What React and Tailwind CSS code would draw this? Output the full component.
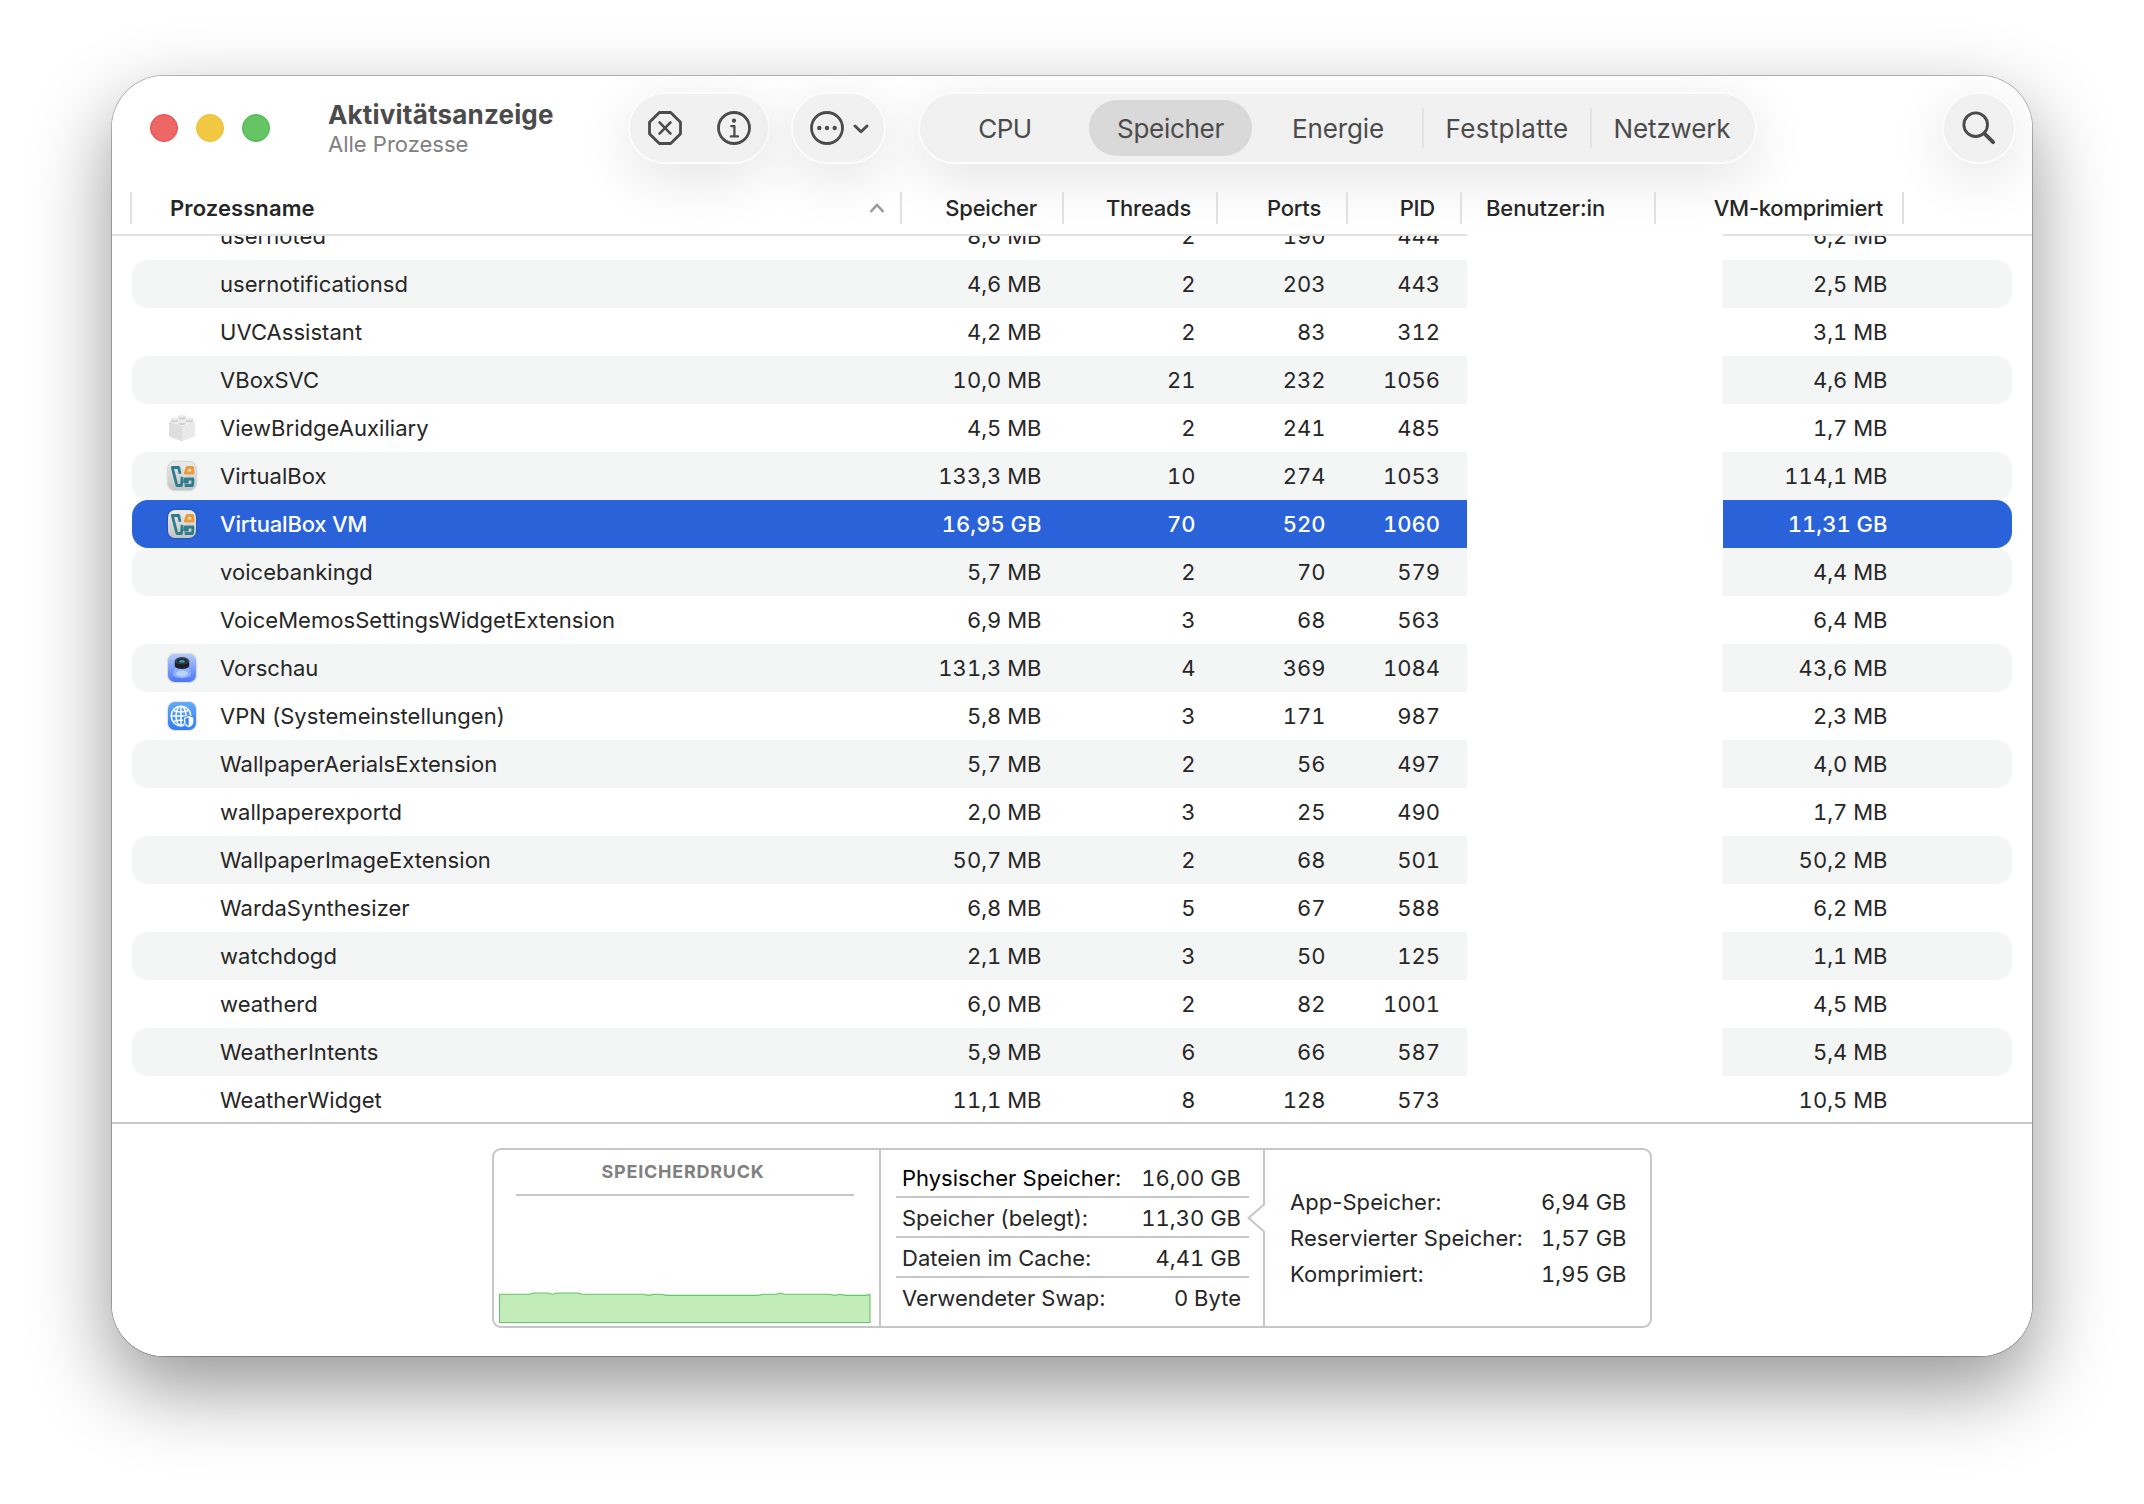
import React from 'react';
import clsx from 'clsx';

const processes = [
  { name: 'usernoted', memory: '8,6 MB', threads: 2, ports: 190, pid: 444, compressed: '6,2 MB' },
  { name: 'usernotificationsd', memory: '4,6 MB', threads: 2, ports: 203, pid: 443, compressed: '2,5 MB' },
  { name: 'UVCAssistant', memory: '4,2 MB', threads: 2, ports: 83, pid: 312, compressed: '3,1 MB' },
  { name: 'VBoxSVC', memory: '10,0 MB', threads: 21, ports: 232, pid: 1056, compressed: '4,6 MB' },
  { name: 'ViewBridgeAuxiliary', icon: 'brick', memory: '4,5 MB', threads: 2, ports: 241, pid: 485, compressed: '1,7 MB' },
  { name: 'VirtualBox', icon: 'vbox', memory: '133,3 MB', threads: 10, ports: 274, pid: 1053, compressed: '114,1 MB' },
  { name: 'VirtualBox VM', icon: 'vbox', memory: '16,95 GB', threads: 70, ports: 520, pid: 1060, compressed: '11,31 GB', selected: true },
  { name: 'voicebankingd', memory: '5,7 MB', threads: 2, ports: 70, pid: 579, compressed: '4,4 MB' },
  { name: 'VoiceMemosSettingsWidgetExtension', memory: '6,9 MB', threads: 3, ports: 68, pid: 563, compressed: '6,4 MB' },
  { name: 'Vorschau', icon: 'preview', memory: '131,3 MB', threads: 4, ports: 369, pid: 1084, compressed: '43,6 MB' },
  { name: 'VPN (Systemeinstellungen)', icon: 'vpn', memory: '5,8 MB', threads: 3, ports: 171, pid: 987, compressed: '2,3 MB' },
  { name: 'WallpaperAerialsExtension', memory: '5,7 MB', threads: 2, ports: 56, pid: 497, compressed: '4,0 MB' },
  { name: 'wallpaperexportd', memory: '2,0 MB', threads: 3, ports: 25, pid: 490, compressed: '1,7 MB' },
  { name: 'WallpaperImageExtension', memory: '50,7 MB', threads: 2, ports: 68, pid: 501, compressed: '50,2 MB' },
  { name: 'WardaSynthesizer', memory: '6,8 MB', threads: 5, ports: 67, pid: 588, compressed: '6,2 MB' },
  { name: 'watchdogd', memory: '2,1 MB', threads: 3, ports: 50, pid: 125, compressed: '1,1 MB' },
  { name: 'weatherd', memory: '6,0 MB', threads: 2, ports: 82, pid: 1001, compressed: '4,5 MB' },
  { name: 'WeatherIntents', memory: '5,9 MB', threads: 6, ports: 66, pid: 587, compressed: '5,4 MB' },
  { name: 'WeatherWidget', memory: '11,1 MB', threads: 8, ports: 128, pid: 573, compressed: '10,5 MB' },
];

const memoryStats = [
  { label: 'Physischer Speicher:', value: '16,00 GB', strong: true },
  { label: 'Speicher (belegt):', value: '11,30 GB' },
  { label: 'Dateien im Cache:', value: '4,41 GB' },
  { label: 'Verwendeter Swap:', value: '0 Byte' },
];

const memoryDetails = [
  { label: 'App-Speicher:', value: '6,94 GB' },
  { label: 'Reservierter Speicher:', value: '1,57 GB' },
  { label: 'Komprimiert:', value: '1,95 GB' },
];

function BrickIcon() {
  return (
    <svg viewBox="0 0 28 28" className="h-7 w-7">
      <path d="M1 7.500 14 12v15.200L3 23.300q-2-.8-2-2.300Z" fill="#dedede" />
      <path d="M14 12 27 7.500V21q0 1.500-2 2.300l-11 3.900Z" fill="#e9e9e9" />
      <path d="M1 7.300 14 3l13 4.300L14 12Z" fill="#f1f1f1" />
      {[[14, 2.6], [6.5, 5.3], [21.5, 5.3], [14, 8]].map(([x, y]) => (
        <g key={`${x}-${y}`}>
          <path d={`M${x - 3.5} ${y - 0.5}v2a3.500 1.600 0 0 0 7 0v-2Z`} fill="#cdcdcd" />
          <ellipse cx={x} cy={y - 0.5} rx="3.5" ry="1.6" fill="#ededed" />
        </g>
      ))}
    </svg>
  );
}

function VirtualBoxIcon() {
  return (
    <svg viewBox="0 0 28 28" className="h-7 w-7 overflow-visible drop-shadow-[0_0.5px_1px_rgba(0,0,0,0.35)]">
      <defs>
        <linearGradient id="vbox" x1="0" y1="0" x2="0" y2="1">
          <stop offset="0" stopColor="#eaebea" />
          <stop offset="1" stopColor="#c3c4c4" />
        </linearGradient>
      </defs>
      <rect width="28" height="28" rx="7" fill="url(#vbox)" />
      <g fill="none" strokeWidth="2.800" strokeLinejoin="round">
        <path d="m12 11.700-1.300-6.200H4.300l4.600 18h4.600l.600-8.700" stroke="#2f7c8c" />
        <path d="M26 17h-8.800l-.700 3h4.200M25 17l-.500 6.500h-7.800" stroke="#2f7c8c" />
        <path d="M24.500 5.400h-5.200l-1.900 5.500h7.500Z" stroke="#ec9a35" strokeWidth="3" />
      </g>
    </svg>
  );
}

function PreviewIcon() {
  return (
    <svg viewBox="0 0 28 28" className="h-7 w-7 overflow-visible drop-shadow-[0_0.5px_1px_rgba(0,0,0,0.3)]">
      <defs>
        <linearGradient id="preview" x1="0" y1="0" x2="0" y2="1">
          <stop offset="0" stopColor="#b4cdfb" />
          <stop offset="1" stopColor="#4a74f5" />
        </linearGradient>
      </defs>
      <rect width="28" height="28" rx="7" fill="url(#preview)" />
      <path d="M7.500 12 5 20c0 5.500 18 5.500 18 0l-2.500-8Z" fill="#8db2fb" />
      <ellipse cx="14" cy="19.500" rx="6" ry="3" fill="#b9d2fd" />
      <path d="M6.800 6.800v5c0 4.200 14.400 4.200 14.400 0v-5Z" fill="#1d1f22" />
      <ellipse cx="14" cy="6.700" rx="7.200" ry="3.600" fill="#43464a" />
      <ellipse cx="14" cy="7" rx="5.200" ry="2.400" fill="#17303f" />
      <ellipse cx="14" cy="7.400" rx="3" ry="1.400" fill="#4a93b5" />
    </svg>
  );
}

function VpnIcon() {
  return (
    <svg viewBox="0 0 28 28" className="h-7 w-7 overflow-visible drop-shadow-[0_0.5px_1px_rgba(0,0,0,0.3)]">
      <defs>
        <linearGradient id="vpn" x1="0" y1="0" x2="0" y2="1">
          <stop offset="0" stopColor="#62abf8" />
          <stop offset="1" stopColor="#2f7df6" />
        </linearGradient>
      </defs>
      <rect width="28" height="28" rx="7" fill="url(#vpn)" />
      <g fill="none" stroke="#fff" strokeWidth="1.500">
        <circle cx="13" cy="14" r="9.800" />
        <ellipse cx="13" cy="14" rx="5" ry="9.800" />
        <path d="M13 4.200v19.600M3.200 14h19.600M5.500 8.300c4 2.300 11 2.300 15 0M5.500 19.700c4-2.300 11-2.300 15 0" />
      </g>
      <path d="m20.700 13 5.500 2v5c0 3-2.200 4.800-5.500 6-3.300-1.200-5.500-3-5.500-6v-5Z" fill="#3784f6" />
      <path d="m20.700 14.700 4 1.500v3.700c0 2-1.500 3.700-4 4.700-2.500-1-4-2.700-4-4.700v-3.700Z" fill="none" stroke="#fff" strokeWidth="1.300" />
      <path d="m20.700 14.700 4 1.500v3.700c0 2-1.500 3.700-4 4.700Z" fill="#fff" />
    </svg>
  );
}

const appIcons = {
  brick: <BrickIcon />,
  vbox: <VirtualBoxIcon />,
  preview: <PreviewIcon />,
  vpn: <VpnIcon />,
};

function Pill({ className, children }) {
  return (
    <div
      className={clsx(
        'flex h-[72px] shrink-0 items-center rounded-full border-2 border-[#fcfcfc] bg-[#f1f1f1] shadow-[0_14px_56px_rgba(0,0,0,0.11)]',
        className,
      )}
    >
      {children}
    </div>
  );
}

function TitleBar() {
  return (
    <div className="flex h-[104px] items-center pr-4 pl-[38px] text-[#4b4b4b]">
      <div className="flex gap-[18px]">
        <span className="h-7 w-7 rounded-full border border-[#e94b4a] bg-[#ec6765]" />
        <span className="h-7 w-7 rounded-full border border-[#eebb2c] bg-[#f2c843]" />
        <span className="h-7 w-7 rounded-full border border-[#47b44a] bg-[#65c466]" />
      </div>

      <div className="mt-0.5 ml-[58px] w-[300px]">
        <h1 className="text-[26px] leading-[29px] font-bold tracking-[0.19px]">Aktivitätsanzeige</h1>
        <p className="text-[22px] leading-[30px] text-[#808080]">Alle Prozesse</p>
      </div>

      <Pill className="w-[142px] gap-[35px] pl-[18px]">
        <svg viewBox="0 0 34 34" className="h-[34px] w-[34px]" fill="none" stroke="currentColor" strokeWidth="2.800" strokeLinecap="round" strokeLinejoin="round">
          <path d="M11.300 1.500h11.400l9.800 9.700v11.600l-9.800 9.700H11.300l-9.800-9.700V11.200Z" />
          <path d="m11.500 11.300 11 11.400m0-11.400-11 11.400" strokeWidth="2.500" />
        </svg>
        <svg viewBox="0 0 34 34" className="h-[34px] w-[34px]" fill="none" stroke="currentColor" strokeWidth="2.800" strokeLinecap="round" strokeLinejoin="round">
          <circle cx="17" cy="17" r="15.500" />
          <circle cx="17" cy="9.700" r="2.100" fill="currentColor" stroke="none" />
          <path d="M14.300 15.200h3.100v10.200m-3.600 0h7.200" strokeWidth="2.300" />
        </svg>
      </Pill>

      <Pill className="ml-[21px] w-[95px] gap-[9px] pl-[17px]">
        <svg viewBox="0 0 34 34" className="h-[34px] w-[34px]" fill="none" stroke="currentColor" strokeWidth="2.800">
          <circle cx="17" cy="17" r="15.500" />
          <g fill="currentColor" stroke="none">
            <circle cx="9.300" cy="17" r="2.200" />
            <circle cx="17" cy="17" r="2.200" />
            <circle cx="24.700" cy="17" r="2.200" />
          </g>
        </svg>
        <svg viewBox="0 0 16 10" className="mt-0.5 h-[10px] w-4" fill="none" stroke="currentColor" strokeWidth="2.900" strokeLinecap="round" strokeLinejoin="round">
          <path d="m2 2 6 5.800L14 2" />
        </svg>
      </Pill>

      <Pill className="ml-8 w-[839px] text-center text-[26px]">
        <span className="w-[169px] pl-px tracking-[-0.5px]">CPU</span>
        <span className="flex h-14 w-[163px] items-center justify-center rounded-full bg-[#d9d9d9] tracking-[-0.3px]">Speicher</span>
        <span className="w-[170px] pl-0.5 tracking-[-0.15px]">Energie</span>
        <span className="h-10 w-0.5 bg-[#e4e4e4]" />
        <span className="w-[166px] tracking-[0.3px]">Festplatte</span>
        <span className="h-10 w-0.5 bg-[#e4e4e4]" />
        <span className="w-[162px] pr-0.5 tracking-[-0.15px]">Netzwerk</span>
      </Pill>

      <Pill className="ml-auto w-[74px] justify-center">
        <svg viewBox="0 0 34 34" className="h-[34px] w-[34px]" fill="none" stroke="currentColor" strokeWidth="2.900">
          <circle cx="13.700" cy="13.700" r="11.800" />
          <path d="m22.300 22.300 8.800 8.800" strokeWidth="3.900" strokeLinecap="round" />
        </svg>
      </Pill>
    </div>
  );
}

function HeaderCell({ className, children }) {
  return (
    <div className={clsx('flex h-8 items-center border-r-2 border-[#e0e0e0]', className)}>{children}</div>
  );
}

function ColumnHeader() {
  return (
    <div className="relative h-14">
      <div className="flex h-14 items-center pl-[18px] text-[22px] tracking-[-0.25px] font-medium text-[#262626]">
        <HeaderCell className="w-[772px] justify-between border-l-2 pr-4 pl-[38px]">
          <span className="font-semibold tracking-[0.1px]">Prozessname</span>
          <svg viewBox="0 0 14 10" className="h-[10px] w-[14px]" fill="none" stroke="#9c9c9c" strokeWidth="2.500" strokeLinecap="round" strokeLinejoin="round">
            <path d="m1.300 8.200 5.700-6.400 5.700 6.400" />
          </svg>
        </HeaderCell>
        <HeaderCell className="w-[162px] justify-end pr-[25px]">Speicher</HeaderCell>
        <HeaderCell className="w-[154px] justify-end pr-[25px]">Threads</HeaderCell>
        <HeaderCell className="w-[130px] justify-end pr-[25px]">Ports</HeaderCell>
        <HeaderCell className="w-[114px] justify-end pr-[25px]">PID</HeaderCell>
        <HeaderCell className="w-[194px] pl-[24px] tracking-[-0.1px]">Benutzer:in</HeaderCell>
        <HeaderCell className="w-[248px] justify-end pr-[19px]">VM-komprimiert</HeaderCell>
      </div>
      <div className="absolute inset-x-0 bottom-0 flex h-0.5 justify-between">
        <span className="w-[1355px] bg-[#e2e2e2]" />
        <span className="w-[309px] bg-[#e2e2e2]" />
      </div>
    </div>
  );
}

function ProcessRow({ process, striped }) {
  const tone = process.selected
    ? 'bg-[#2962d9] text-white font-medium'
    : striped
      ? 'bg-[#f4f5f5]'
      : 'bg-white';

  return (
    <div className="flex h-12 justify-between pr-5 pl-5 text-[22px] text-[#262626]">
      <div className={clsx('flex w-[1335px] items-center rounded-l-2xl pl-9', tone)}>
        <span className="flex h-7 w-7 items-center justify-center">{appIcons[process.icon]}</span>
        <span className={clsx('w-[682px] pl-6', process.selected ? 'tracking-[-0.2px]' : 'tracking-[0.04px]')}>{process.name}</span>
        <span className="w-[163.500px] text-right tabular-nums">{process.memory}</span>
        <span className="w-[154px] text-right tabular-nums">{process.threads}</span>
        <span className="w-[130px] text-right tabular-nums">{process.ports}</span>
        <span className="w-[114.500px] text-right tabular-nums">{process.pid}</span>
      </div>
      <div className={clsx('flex w-[289px] items-center justify-end rounded-r-2xl pr-[124.500px] tabular-nums', tone)}>
        {process.compressed}
      </div>
    </div>
  );
}

function PressureChart() {
  return (
    <div className="flex w-[385px] flex-col pl-[5px]">
      <h2 className="mt-2.5 w-[368px] text-center text-[18px] leading-[24px] font-bold tracking-[0.75px] text-[#808080]">SPEICHERDRUCK</h2>
      <div className="mt-[10px] ml-[17px] h-0.5 w-[338px] bg-[#c6c6c6]" />
      <svg viewBox="0 0 372 31" className="mt-auto mb-[3px] h-[31px] w-[372px]">
        <defs>
          <linearGradient id="pressure" x1="0" y1="0" x2="0" y2="1">
            <stop offset="0" stopColor="#c0ebb6" />
            <stop offset="1" stopColor="#c6edbd" />
          </linearGradient>
        </defs>
        <path
          d="M.500 30.500v-28.300h30l4-1.200h14l5 1.200 5-1.200h20l5 1.200h61l5 1.200 5-1.200h8l5 1.200h91l6-1.200h13l4-1.200 4 1.200h45l5 1.200 6-1.200 5 1.200h20l4.500-1v28.100Z"
          fill="url(#pressure)"
          stroke="#66c466"
          strokeWidth="1.100"
        />
      </svg>
    </div>
  );
}

function Footer() {
  return (
    <div className="flex h-[234px] justify-center border-t-2 border-[#c6c6c6] bg-white pt-6 text-[22px] text-[#262626]">
      <div className="flex h-[180px] w-[1160px] rounded-[9px] border-2 border-[#c6c6c6]">
        <PressureChart />

        <div className="relative w-[386px] border-x-2 border-[#c6c6c6] pt-2 pr-[14px] pl-[15px]">
          {memoryStats.map((stat, index) => (
            <div
              key={stat.label}
              className={clsx(
                'flex h-10 items-center justify-between pr-2 pl-1.5',
                index !== memoryStats.length - 1 ? 'border-b-2 border-[#c6c6c6] pt-[3px]' : 'pt-px',
              )}
            >
              <span className={stat.strong ? 'text-black' : ''}>{stat.label}</span>
              <span className="tabular-nums">{stat.value}</span>
            </div>
          ))}
          {/* callout arrow pointing at the used memory row */}
          <svg viewBox="0 0 18 30" className="absolute top-[53px] right-[-2px] h-[30px] w-[18px]">
            <path d="M16 1h2v28h-2Z" fill="#fff" />
            <path d="M17 0v1.500L1.500 15 17 28.500V30" fill="none" stroke="#c6c6c6" strokeWidth="2" />
          </svg>
        </div>

        <div className="flex flex-1 flex-col justify-center pr-[23.500px] pl-[25px]">
          {memoryDetails.map((detail) => (
            <div key={detail.label} className="flex h-9 items-center justify-between">
              <span className="tracking-[0.05px]">{detail.label}</span>
              <span className="tabular-nums">{detail.value}</span>
            </div>
          ))}
        </div>
      </div>
    </div>
  );
}

export default function App() {
  return (
    <div className="flex h-[1504px] w-[2144px] items-start justify-center overflow-hidden bg-white pt-[76px] font-[Inter,'Liberation_Sans',sans-serif]">
      <div className="flex h-[1280px] w-[1920px] flex-col rounded-[52px] shadow-[0_0_0_1px_rgba(0,0,0,0.25),0_32px_80px_rgba(0,0,0,0.42)]">
        <div className="flex h-full w-full flex-col overflow-hidden rounded-[52px] bg-white">
          <TitleBar />
          <ColumnHeader />
          <div className="relative h-[886px] overflow-hidden bg-white">
            <div className="-mt-6">
              {processes.map((process, index) => (
                <ProcessRow key={process.name} process={process} striped={index % 2 === 1} />
              ))}
            </div>
          </div>
          <Footer />
        </div>
      </div>
    </div>
  );
}
